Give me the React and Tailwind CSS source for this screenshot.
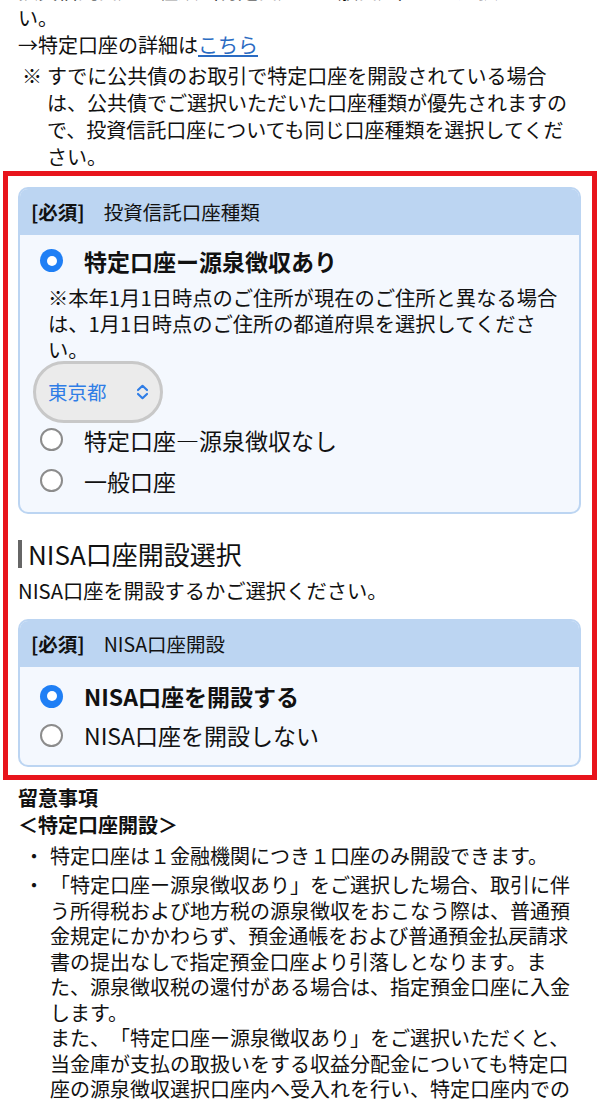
import React from 'react'

function Radio({ checked }) {
  if (checked) {
    return (
      <span className="w-[23px] h-[23px] rounded-full bg-[#1f7ff5] flex items-center justify-center shrink-0">
        <span className="w-[10px] h-[10px] rounded-full bg-white" />
      </span>
    )
  }
  return <span className="w-[23px] h-[23px] rounded-full border-2 border-[#8c8c8c] bg-white shrink-0" />
}

function Option({ checked, label, h = 'h-[34px]' }) {
  return (
    <div className={`flex items-center ${h}`}>
      <Radio checked={checked} />
      <span className={`ml-[21px] text-[23px] leading-[30px] ${checked ? 'font-bold' : ''}`}>{label}</span>
    </div>
  )
}

function CardHeader({ title }) {
  return (
    <div className="h-[46px] bg-[#bcd5f2] flex items-center px-[11px] text-[19.5px]">
      <span className="font-bold">[必須]</span>
      <span className="ml-[19px]">{title}</span>
    </div>
  )
}

function Chevrons() {
  return (
    <svg width="13" height="16" viewBox="0 0 13 16" fill="none" stroke="#2f7de6" strokeWidth="2.2" strokeLinecap="round" strokeLinejoin="round">
      <path d="M2 6 L6.5 1.8 L11 6" />
      <path d="M2 10 L6.5 14.2 L11 10" />
    </svg>
  )
}

export default function App() {
  return (
    <div className="w-[600px] h-[1103px] overflow-hidden bg-white text-[#111] [text-spacing-trim:space-all] font-['Noto_Sans_CJK_JP','Noto_Sans',sans-serif]">
      <div className="-mt-[23px]">
        {/* Intro */}
        <div className="px-[18px] text-[20px] leading-[27px]">
          <p>投資信託口座の種類（特定口座と一般口座）をご選択くださ<br />い。</p>
          <p>→特定口座の詳細は<a className="text-[#2a6bc2] underline underline-offset-2">こちら</a></p>
          <div className="flex mt-[4px]">
            <span className="pl-[4px] w-[29px] shrink-0">※</span>
            <p>
              すでに公共債のお取引で特定口座を開設されている場合<br />
              は、公共債でご選択いただいた口座種類が優先されますの<br />
              で、投資信託口座についても同じ口座種類を選択してくだ<br />
              さい。
            </p>
          </div>
        </div>

        {/* Highlighted box */}
        <div className="mx-[3px] mt-[0.5px] border-[5px] border-[#e8141c] pt-[11px] pb-[8px] pl-[10px] pr-[11px]">
          <div className="rounded-[10px] border-2 border-[#bcd5f2] bg-[#f4f8fe] overflow-hidden">
            <CardHeader title="投資信託口座種類" />
            <div className="pt-[6px] pb-[14px] pl-[20px]">
              <Option checked label="特定口座ー源泉徴収あり" h="h-[40px]" />
              <p className="mt-[3px] pl-[8px] text-[20.3px] leading-[26px]">
                ※本年1月1日時点のご住所が現在のご住所と異なる場合<br />
                は、1月1日時点のご住所の都道府県を選択してくださ<br />
                い。
              </p>
              <div className="-mt-[1px] -ml-[7px] w-[130px] h-[62px] rounded-full border-[3px] border-[#c8c8c8] bg-[#ebebeb] flex items-center justify-between pl-[12px] pr-[11px]">
                <span className="text-[19.5px] text-[#2f7de6]">東京都</span>
                <Chevrons />
              </div>
              <Option label="特定口座―源泉徴収なし" h="h-[34px]" />
              <div className="mt-[7px]">
                <Option label="一般口座" h="h-[34px]" />
              </div>
            </div>
          </div>

          <div className="mt-[26px] flex items-center h-[28px]">
            <span className="w-[4px] h-[28px] bg-[#666]" />
            <span className="ml-[6px] text-[26px] leading-[28px]">NISA口座開設選択</span>
          </div>
          <p className="mt-[9px] text-[20.3px] leading-[27px]">NISA口座を開設するかご選択ください。</p>

          <div className="mt-[15px] rounded-[10px] border-2 border-[#bcd5f2] bg-[#f4f8fe] overflow-hidden">
            <CardHeader title="NISA口座開設" />
            <div className="pt-[10px] pb-[10px] pl-[20px]">
              <Option checked label="NISA口座を開設する" h="h-[39px]" />
              <Option label="NISA口座を開設しない" h="h-[39px]" />
            </div>
          </div>
        </div>

        {/* Notes */}
        <div className="px-[18px] mt-[4px] text-[20px]">
          <p className="font-bold leading-[27px]">留意事項</p>
          <p className="font-bold leading-[27px]">＜特定口座開設＞</p>
          <ul className="mt-[5px] leading-[25.5px]">
            <li className="flex">
              <span className="w-[32px] shrink-0 pl-[6px]">・</span>
              <span>特定口座は１金融機関につき１口座のみ開設できます。</span>
            </li>
            <li className="flex mt-[4px]">
              <span className="w-[32px] shrink-0 pl-[6px]">・</span>
              <span>
                「特定口座ー源泉徴収あり」をご選択した場合、取引に伴<br />
                う所得税および地方税の源泉徴収をおこなう際は、普通預<br />
                金規定にかかわらず、預金通帳をおよび普通預金払戻請求<br />
                書の提出なしで指定預金口座より引落しとなります。ま<br />
                た、源泉徴収税の還付がある場合は、指定預金口座に入金<br />
                します。<br />
                また、「特定口座ー源泉徴収あり」をご選択いただくと、<br />
                当金庫が支払の取扱いをする収益分配金についても特定口<br />
                座の源泉徴収選択口座内へ受入れを行い、特定口座内での
              </span>
            </li>
          </ul>
        </div>
      </div>
    </div>
  )
}
